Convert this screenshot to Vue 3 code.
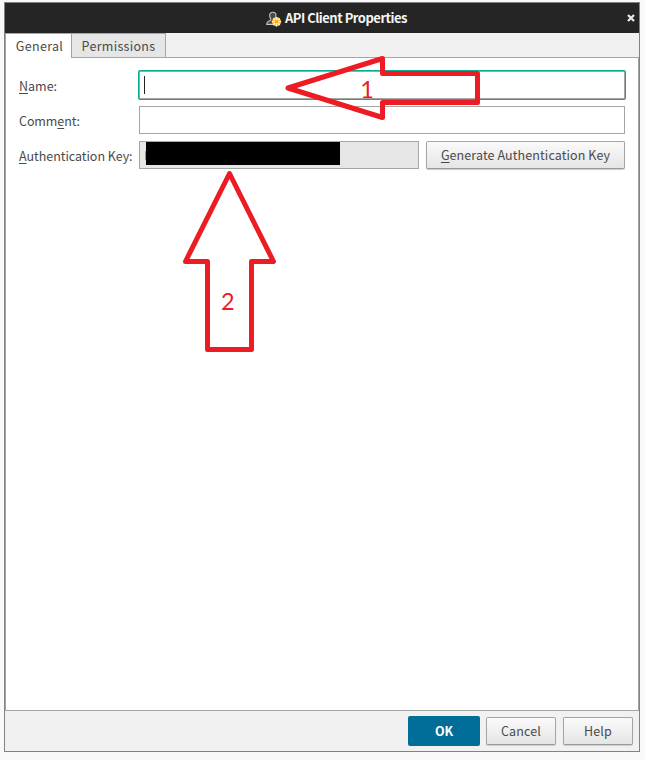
<script setup>
const tabs = [
  { label: 'General', active: true },
  { label: 'Permissions', active: false },
]
</script>

<template>
  <div class="desktop">
    <section class="window">
      <header class="titlebar">
        <svg class="client-icon" width="16" height="16" viewBox="0 0 16 16">
          <path d="M.7 13.400c0-2 .7-2.800 2.300-3.400 1.800-.6 2.200-1.200 1.600-2.400C3.900 6.600 3.700 5.700 3.700 4.400 3.700 2.400 4.800 1.200 6.800 1.200s3.200 1.300 3.200 3.200c0 1.300-.4 2.400-1 3.400v5.600z" fill="#484848" stroke="#c4c4c4" stroke-width="1.100" />
          <circle cx="10.500" cy="10.700" r="4.600" fill="#ffb62b" />
          <path d="M10.500 6v9.400M5.800 10.700h9.400M7.200 7.400l6.600 6.600M13.800 7.400L7.200 14" stroke="#fff8e2" stroke-width="1.300" />
          <circle cx="10.500" cy="10.700" r="1.900" fill="#ffa900" />
        </svg>
        <h1>API Client Properties</h1>
        <svg class="close" width="8" height="8" viewBox="0 0 8 8">
          <path d="M1 1l6 6M7 1L1 7" stroke="#e8e8e8" stroke-width="2.300" />
        </svg>
      </header>
      <nav class="tabs">
        <div v-for="tab in tabs" :key="tab.label" class="tab" :class="{ active: tab.active }">
          <span>{{ tab.label }}</span>
        </div>
        <div class="tab-rest"></div>
      </nav>
      <main class="panel">
        <div class="row">
          <label><u>N</u>ame:</label>
          <div class="field focused"><i class="caret"></i></div>
        </div>
        <div class="row">
          <label class="comment">Comm<u>e</u>nt:</label>
          <div class="field"></div>
        </div>
        <div class="row">
          <label class="auth"><u>A</u>uthentication Key:</label>
          <div class="field readonly"><i class="sliver"></i><i class="redacted"></i></div>
          <div class="button generate"><span><u>G</u>enerate Authentication Key</span></div>
        </div>
      </main>
      <footer class="actions">
        <div class="button ok"><span>OK</span></div>
        <div class="button cancel"><span>Cancel</span></div>
        <div class="button help"><span>Help</span></div>
      </footer>
    </section>
    <svg class="annotations" width="654" height="760" viewBox="0 0 654 760">
      <g fill="none" stroke="#ed1c24" stroke-width="5" stroke-linejoin="round">
        <path d="M288 88L382.500 58.500V73.500H477.500V102.500H382.500V117.500Z" />
        <path d="M229.500 173.500L273.500 261.500H251.500V349.500H207.500V261.500H185.500Z" />
      </g>
      <text x="360.300" y="98">1</text>
      <text x="221" y="310">2</text>
    </svg>
  </div>
</template>

<style>
body { background: #fff; }
</style>

<style scoped>
* { box-sizing: border-box; }
.desktop {
  position: relative;
  width: 654px;
  height: 760px;
  padding: 2px 0 0 4px;
  overflow: hidden;
  background: linear-gradient(90deg, #f9f9f9 645px, #fff 645px);
  color: #4a4a4a;
  font-family: "Noto Sans CJK SC", "Open Sans", sans-serif;
  font-size: 12.5px;
  line-height: 18px;
}
.window {
  display: flex;
  flex-direction: column;
  width: 636px;
  height: 750px;
  border: 1px solid #828282;
  background: #f1f1f1;
}
.titlebar {
  display: flex;
  align-items: center;
  flex: none;
  height: 30px;
  padding: 0 4px 0 261px;
  background: #252525;
}
.client-icon { margin-top: 1px; }
h1 {
  margin: 0 auto 0 3px;
  color: #f4f4f4;
  font-size: 13px;
  font-weight: 700;
  line-height: 18px;
  letter-spacing: -.5px;
  white-space: nowrap;
}
.tabs { display: flex; flex: none; height: 25px; }
.tab {
  display: flex;
  align-items: center;
  justify-content: center;
  width: 95px;
  padding-top: 1px;
  border: 1px solid #a5a5a5;
  background: #e6e6e6;
  letter-spacing: .3px;
}
.tab.active { width: 66px; padding: 0 0 0 2px; border-right: 0; border-bottom: 0; background: #fff; }
.tab-rest { flex: 1; border-bottom: 1px solid #a5a5a5; }
.panel {
  display: flex;
  flex-direction: column;
  gap: 7px;
  flex: 1;
  padding: 13px 13px 0 13px;
  border: 1px solid #a5a5a5;
  border-top: 0;
  background: #fff;
}
.row { display: flex; height: 28px; align-items: center; }
label { flex: none; width: 120px; padding-top: 2px; white-space: nowrap; }
.comment { letter-spacing: -.1px; }
.auth { letter-spacing: -.04px; }
u { text-decoration-thickness: 1px; text-underline-offset: 2px; }
.field {
  display: flex;
  flex: 1;
  height: 28px;
  border: 1px solid #a5a5a5;
  background: #fff;
}
.focused { box-shadow: 0 0 0 1px #09ab92; border-radius: 1px; }
.caret { width: 1px; height: 18px; margin: 4px 0 0 4px; background: #222; }
.readonly { background: #e6e6e6; }
.sliver { width: 1px; height: 9px; margin: 9px 0 0 5px; background: #999; }
.redacted { width: 194px; height: 23px; background: #000; }
.button {
  display: flex;
  flex: none;
  align-items: center;
  justify-content: center;
  height: 28px;
  border: 1px solid #a5a5a5;
  border-bottom-color: #999;
  border-radius: 2px;
  background: linear-gradient(#fafafa, #e5e5e5);
  box-shadow: 0 1px 1px #ccc;
  letter-spacing: .15px;
  white-space: nowrap;
}
.generate { width: 199px; margin-left: 7px; letter-spacing: .1px; }
.actions {
  display: flex;
  flex: none;
  align-items: center;
  justify-content: flex-end;
  height: 40px;
  padding-right: 6px;
}
.ok {
  width: 72px;
  height: 30px;
  margin-right: 6px;
  border: 0;
  background: #006e98;
  box-shadow: none;
  color: #fff;
  font-weight: 700;
  letter-spacing: 0;
}
.cancel { width: 70px; margin-right: 7px; }
.help { width: 70px; }
.annotations { position: absolute; top: 0; left: 0; }
.annotations text { fill: #ed1c24; font-family: Lato, sans-serif; font-size: 23.500px; }
</style>
